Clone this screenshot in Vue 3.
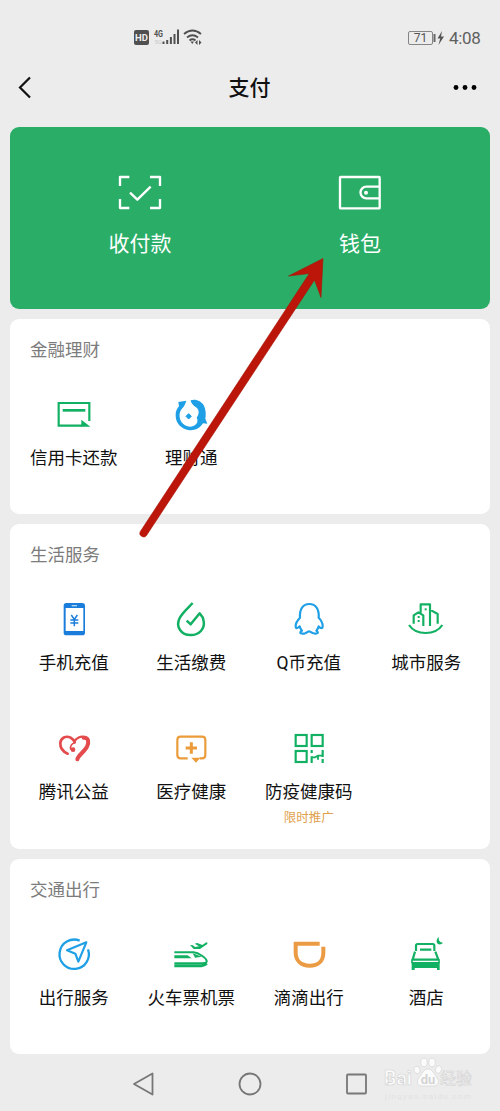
<script setup>
const G = '#12b062'
const B = '#1f9fe6'

const actions = [
  {
    label: '收付款',
    box: '78 24 144 144',
    art: `<g fill="none" stroke="#fff" stroke-width="7" stroke-linejoin="round"><path d="M90 78V51H118M180 51H210V78M210 117V144H180M118 144H90V117"/><path d="M120 98L142 119L182 80"/></g>`
  },
  {
    label: '钱包',
    box: '228 24 144 144',
    art: `<g fill="none" stroke="#fff" stroke-width="7" stroke-linejoin="round"><rect x="240" y="51" width="119" height="94" rx="2"/><path d="M359 80H319A17.500 17.500 0 0 0 319 115H359"/></g><circle cx="318" cy="98" r="6" fill="#fff"/>`
  }
]

const sections = [
  {
    title: '金融理财',
    size: 'short',
    items: [
      {
        label: '信用卡还款',
        box: '155 276 132 132',
        art: `<path d="M267 363V309H175V377H246" fill="none" stroke="${G}" stroke-width="6.500"/><path d="M187 331H255" stroke="${G}" stroke-width="8"/><path d="M243 359L270 380H243Z" fill="${G}"/>`
      },
      {
        label: '理财通',
        box: '508 276 132 132',
        art: `<path d="M536 306L560 302C557 312 552 321 546 327C536 339 538 361 551 372C564 383 580 382 589 373C595 367 594 360 591 352C598 345 600 331 591 323C583 318 574 311 573 301C588 296 605 303 613 317C619 329 619 345 617 356L623 371L610 370C600 386 583 393 565 390C544 386 529 370 528 349C527 335 532 325 538 319Z" fill="${B}"/><path d="M567 341L575 349L567 357L559 349Z" fill="${B}" stroke="${B}" stroke-width="3"/>`
      }
    ]
  },
  {
    title: '生活服务',
    size: 'tall',
    items: [
      {
        label: '手机充值',
        box: '95 21 132 132',
        art: `<rect x="130" y="39" width="64" height="97" rx="8" fill="#1b7ddb"/><rect x="136" y="54" width="53" height="69" fill="#fff"/><path d="M154 47H170" stroke="#b5d7f5" stroke-width="4"/><path d="M153 75L162 88L171 75M162 88V109M150 90H174M150 99H174" fill="none" stroke="#1b7ddb" stroke-width="4.500"/>`
      },
      {
        label: '生活缴费',
        box: '448 21 132 132',
        art: `<path d="M519 39C505 54 486 70 479 86C468 111 485 135 512 135C539 136 556 116 552 93C551 84 546 76 540 70L513 103L501 92" fill="none" stroke="${G}" stroke-width="7.500" stroke-linejoin="round"/>`
      },
      {
        label: 'Q币充值',
        box: '110 21 132 132',
        art: `<path d="M149 83C147 57 158 42 177 42C196 42 207 57 205 83C211 89 217 99 217 108C217 117 211 116 205 109C204 114 201 119 198 122C210 131 196 132 187 129C181 127 179 124 176 124C173 124 171 128 164 130C154 132 143 130 155 122C151 118 149 114 148 109C141 116 136 117 136 108C136 99 143 89 149 83Z" fill="none" stroke="${B}" stroke-width="6.500" stroke-linejoin="round"/>`
      },
      {
        label: '城市服务',
        box: '463 21 132 132',
        art: `<g fill="none" stroke="${G}" stroke-width="6.500" stroke-linejoin="round"><path d="M492 101V76L506 67L521 76V108M513 68V43H541V108M541 59L564 72V101"/><path d="M478 105C499 137 557 137 578 105"/></g><g fill="${G}"><rect x="525" y="55" width="6" height="6"/><rect x="504" y="78" width="6" height="6"/><rect x="504" y="90" width="6" height="6"/></g>`
      },
      {
        label: '腾讯公益',
        box: '95 18 132 132',
        art: `<g fill="none" stroke="#e34b4d" stroke-linecap="round" stroke-linejoin="round"><path d="M142 101C131 96 119 85 120 69C121 53 137 46 151 53C156 56 160 60 163 66" stroke-width="8"/><path d="M162 66C167 54 181 47 194 51" stroke-width="7"/><path d="M190 53C206 52 206 69 200 80C193 95 173 106 171 118" stroke-width="12"/><path d="M163 69C155 70 149 77 151 87L160 92" stroke-width="5"/></g><circle cx="158" cy="89" r="7" fill="#e34b4d"/>`
      },
      {
        label: '医疗健康',
        box: '448 18 132 132',
        art: `<path d="M504 115H483Q473 115 473 105V60Q473 50 483 50H547Q557 50 557 60V105Q557 115 547 115H540" fill="none" stroke="#eb9b3a" stroke-width="6.500"/><path d="M515 113H542L529 128Z" fill="#eb9b3a"/><path d="M515 67V101M498 84H532" stroke="#eb9b3a" stroke-width="9"/>`
      },
      {
        label: '防疫健康码',
        note: '限时推广',
        box: '110 18 132 132',
        art: `<g fill="none" stroke="${G}" stroke-width="6.500"><rect x="136" y="45" width="33" height="33"/><rect x="184" y="45" width="33" height="33"/><rect x="136" y="93" width="33" height="33"/><path d="M184 90V99M217 90V111M184 129V109M217 117V129"/><path d="M184 112H194L203 107H217M203 107V119" stroke-width="5.500"/></g>`
      }
    ]
  },
  {
    title: '交通出行',
    size: 'short',
    items: [
      {
        label: '出行服务',
        box: '95 18 132 132',
        art: `<g fill="none" stroke="${B}" stroke-width="7"><path d="M178 44A44 44 0 1 0 203 70"/><path d="M198 49L140 73L165 83L174 107Z" stroke-width="6.500" stroke-linejoin="round"/></g>`
      },
      {
        label: '火车票机票',
        box: '448 18 132 132',
        art: `<g fill="none" stroke="${G}"><path d="M464 79H522C537 81 558 94 561 104C563 112 551 112 541 112H464" stroke-width="6"/><path d="M464 119H546Q555 119 561 112" stroke-width="9"/></g><g fill="${G}"><path d="M464 88H504L516 97H464ZM519 82L547 92L526 95Z"/><path d="M511 57L520 58L526 63L538 61L525 53L533 51L548 57L560 49Q565 49 563 54L541 69L522 69Z"/></g>`
      },
      {
        label: '滴滴出行',
        box: '110 18 132 132',
        art: `<path d="M208 53H136V79C136 105 153 119 178 119C203 119 219 105 219 80V62" fill="none" stroke="#eb9b43" stroke-width="12"/>`
      },
      {
        label: '酒店',
        box: '463 18 132 132',
        art: `<g fill="none" stroke="${G}" stroke-width="6.500" stroke-linejoin="round"><path d="M499 75V59Q499 54 504 54H549Q554 54 554 59V75"/><path d="M511 71H545M496 77L489 101H566L557 77"/></g><path d="M486 108H570V132H562V126H495V132H486Z" fill="${G}"/><path d="M487 100V112M568 100V112" stroke="${G}" stroke-width="5"/><path d="M568 33C560 38 559 48 564 53C569 57 576 55 580 50C571 50 565 43 568 33Z" fill="${G}"/>`
      }
    ]
  }
]
</script>

<template>
  <div class="screen">
    <div class="status">
      <svg class="signals" width="70" height="20" viewBox="0 0 70 20">
        <rect x="0" y="3" width="15" height="15" rx="2" fill="#505050" />
        <text x="7.500" y="14" text-anchor="middle" font-size="9.500" font-weight="700" fill="#eee">HD</text>
        <text x="20" y="9.500" font-size="9" font-weight="700" fill="#505050" textLength="9" lengthAdjust="spacingAndGlyphs">4G</text>
        <text x="20.500" y="17" font-size="6" fill="#c8c8c8">5G</text>
        <path d="M29.500 17V14.500M33.200 17V13M36.900 17V10M40.500 17V7M44 17V2.500" stroke="#505050" stroke-width="2" fill="none" />
        <g fill="none" stroke="#505050" stroke-width="1.800">
          <path d="M50 7Q58.500 0 67 7M53 10.500Q58.500 6 64 10.500M55.500 13.500Q58.500 11 61.500 13.500" />
        </g>
        <path d="M56.500 14.500H60L58.300 17ZM61 15.500L63.500 13V18ZM67.500 15.500L65 13V18Z" fill="#505050" />
      </svg>
      <div class="power">
        <div class="battery">71</div>
        <svg width="12" height="14" viewBox="0 0 12 14">
          <path d="M1.500 3V11" stroke="#666" stroke-width="2" />
          <path d="M9 0L4.500 7.500H7.200L5.500 14L11 5.500H8Z" fill="#555" />
        </svg>
        <span class="time">4:08</span>
      </div>
    </div>

    <header class="header">
      <svg width="14" height="24" viewBox="0 0 14 24">
        <path d="M13 1.500L3 11.500L13 21.500" fill="none" stroke="#111" stroke-width="2.200" />
      </svg>
      <h1>支付</h1>
      <svg width="24" height="8" viewBox="0 0 24 8">
        <g fill="#000"><circle cx="3" cy="3.500" r="2.400" /><circle cx="12" cy="3.500" r="2.400" /><circle cx="21" cy="3.500" r="2.400" /></g>
      </svg>
    </header>

    <main class="cards">
      <section class="hero">
        <div v-for="a in actions" :key="a.label" class="action">
          <svg width="48" height="48" :viewBox="a.box" v-html="a.art"></svg>
          <span>{{ a.label }}</span>
        </div>
      </section>

      <section v-for="s in sections" :key="s.title" class="card" :class="s.size">
        <h2>{{ s.title }}</h2>
        <div class="grid">
          <div v-for="i in s.items" :key="i.label" class="item">
            <svg width="44" height="44" :viewBox="i.box" v-html="i.art"></svg>
            <span class="label">{{ i.label }}</span>
            <span v-if="i.note" class="note">{{ i.note }}</span>
          </div>
        </div>
      </section>
    </main>

    <nav class="nav">
      <svg width="24" height="24" viewBox="0 0 24 24"><path d="M20.500 1.500V22.500L2 12Z" /></svg>
      <svg width="24" height="24" viewBox="0 0 24 24"><circle cx="12" cy="12" r="10.500" /></svg>
      <svg width="24" height="24" viewBox="0 0 24 24"><rect x="2" y="2.500" width="19" height="19" rx="1" /></svg>
    </nav>

    <svg class="watermark" width="96" height="50" viewBox="0 0 96 50">
      <g class="mark">
        <text x="3" y="32" font-size="20" font-weight="700" textLength="28" lengthAdjust="spacingAndGlyphs">Bai</text>
        <text x="59" y="31" font-size="16" textLength="32">经验</text>
      </g>
      <g fill="#fbfbfb" stroke="#d6d6d6" stroke-width=".7" transform="translate(8.500 0)">
        <ellipse cx="27.500" cy="17" rx="3" ry="3.800" transform="rotate(-15 27.500 17)" />
        <ellipse cx="34.500" cy="9.500" rx="3.200" ry="4.300" />
        <ellipse cx="42.500" cy="9.500" rx="3.200" ry="4.300" />
        <ellipse cx="49" cy="16.500" rx="3" ry="3.800" transform="rotate(15 49 16.500)" />
        <path d="M38.500 16C43 16 44.500 21 47 24C51 29 48 33 44 33H33C28 33 26 29 30 24C32.500 21 34 16 38.500 16Z" />
      </g>
      <text x="47" y="31" font-size="13" font-weight="700" text-anchor="middle" class="du">du</text>
      <text x="4" y="46" font-size="8" fill="#e2e2e2" textLength="86">jingyan.baidu.com</text>
    </svg>

    <svg class="arrow" width="200" height="290" viewBox="135 255 200 290">
      <path d="M140.300 531.500L309.300 273.500L288.500 276L323 258.500L321 297.500L314.500 280L146.500 535.500A3.700 3.700 0 0 1 140.300 531.500Z" fill="#bb1609" stroke="#a81408" stroke-width=".6" />
    </svg>
  </div>
</template>

<style>
body {
  background: #ececec;
}
</style>

<style scoped>
.screen {
  position: relative;
  width: 500px;
  height: 1111px;
  overflow: hidden;
  background: #ececec;
  font-family: Roboto, "Noto Sans CJK SC", sans-serif;
  color: #111;
}
svg {
  display: block;
  flex: none;
}
.status {
  box-sizing: border-box;
  height: 54px;
  padding: 20px 19px 0 134px;
  display: flex;
  justify-content: space-between;
}
.signals {
  margin-top: 7px;
}
.power {
  display: flex;
  align-items: center;
  height: 35px;
}
.battery {
  box-sizing: border-box;
  width: 25px;
  height: 14px;
  border: 1px solid #858585;
  border-radius: 2px;
  font-size: 12px;
  line-height: 12px;
  text-align: center;
  color: #555;
}
.time {
  margin-left: 4px;
  width: 32px;
  font-size: 17px;
  color: #606060;
  white-space: nowrap;
  letter-spacing: -0.3px;
}
.header {
  height: 67px;
  margin-bottom: 6px;
  padding: 0 23px 0 17px;
  display: flex;
  align-items: center;
  justify-content: space-between;
}
.header h1 {
  margin: 0;
  padding-left: 15px;
  font-size: 21px;
  line-height: 30px;
  font-weight: 500;
}
.cards {
  display: flex;
  flex-direction: column;
  gap: 10px;
  padding: 0 10px;
}
.hero {
  box-sizing: border-box;
  height: 182px;
  padding: 41px 20px 0;
  border-radius: 9px;
  background: #2aae67;
  display: flex;
}
.action {
  flex: 1;
  display: flex;
  flex-direction: column;
  align-items: center;
  gap: 13px;
  color: #fff;
  font-size: 21px;
  line-height: 30px;
}
.card {
  box-sizing: border-box;
  padding: 19px 5px 0;
  border-radius: 9px;
  background: #fff;
}
.short {
  height: 195px;
}
.tall {
  height: 325px;
}
.card h2 {
  margin: 0 0 30px 15px;
  font-size: 17.5px;
  line-height: 24px;
  font-weight: 400;
  color: #7c7c7c;
}
.grid {
  display: grid;
  grid-template-columns: repeat(4, 1fr);
  grid-auto-rows: 129px;
}
.item {
  display: flex;
  flex-direction: column;
  align-items: center;
}
.label {
  margin-top: 9.5px;
  font-size: 17.5px;
  line-height: 24px;
  white-space: nowrap;
}
.note {
  margin-top: 5px;
  font-size: 12.5px;
  line-height: 18px;
  color: #dfa14e;
}
.nav {
  height: 60px;
  display: flex;
  align-items: center;
  justify-content: center;
  gap: 82.5px;
}
.nav svg {
  fill: none;
  stroke: #777;
  stroke-width: 1.8;
  stroke-linejoin: round;
}
.watermark {
  position: absolute;
  left: 381px;
  top: 1053px;
}
.mark {
  fill: #fbfbfb;
  stroke: #d2d2d2;
  stroke-width: 0.6px;
}
.du {
  fill: #d4d4d4;
}
.arrow {
  position: absolute;
  left: 135px;
  top: 255px;
}
</style>
